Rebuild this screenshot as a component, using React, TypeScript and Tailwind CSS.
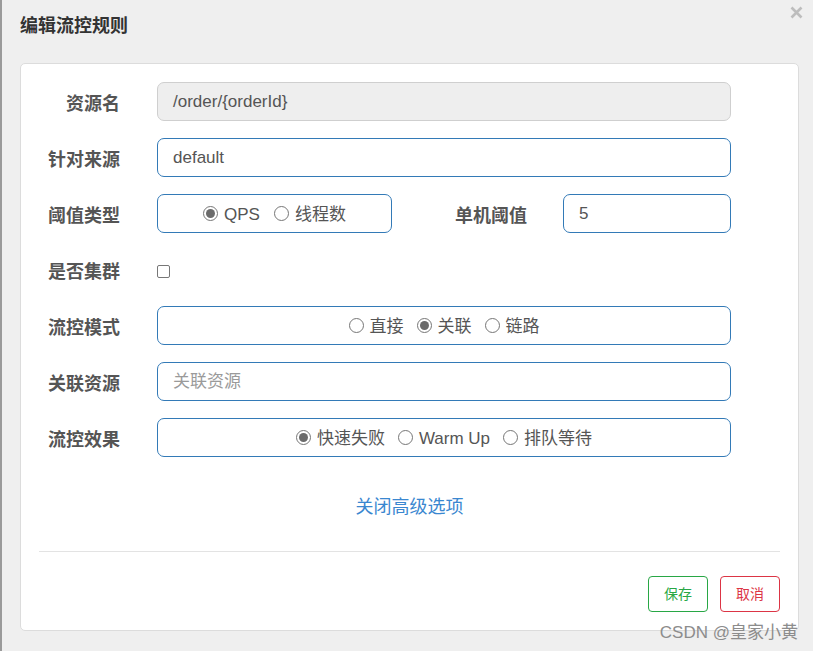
import React from 'react';

const cjk = { fontFamily: '"Liberation Sans", "Noto Sans CJK SC", sans-serif' };

function Radio({ checked, label }: { checked?: boolean; label: string }) {
  return (
    <span className="flex items-center gap-[6px]">
      <span className="w-[15px] h-[15px] rounded-full border border-[#767676] bg-white flex items-center justify-center">
        {checked && <span className="w-[9px] h-[9px] rounded-full bg-[#6b6b6b]" />}
      </span>
      <span className="pt-[2px]">{label}</span>
    </span>
  );
}

function Label({ children }: { children: React.ReactNode }) {
  return <div className="w-[99px] shrink-0 pt-[5px] text-right font-bold text-[18px] text-[#555]">{children}</div>;
}

const box = 'h-[39px] rounded-[7px] border border-[#337ab7] bg-white flex items-center text-[17px] text-[#555]';

export default function App() {
  return (
    <div className="w-[813px] h-[651px] bg-[#efefef] flex relative overflow-hidden" style={cjk}>
      <div className="w-[2px] h-full bg-[#9a9a9a]" />
      <div className="flex-1 flex flex-col">
        <div className="h-[63px] flex items-center justify-between pl-[18px] pr-[10px]">
          <h1 className="text-[18px] font-bold text-[#333] -mt-[10px]">编辑流控规则</h1>
          <svg width="13" height="13" viewBox="0 0 13 13" className="-mt-[38px]">
            <path d="M1.5 1.5 L11.5 11.5 M11.5 1.5 L1.5 11.5" stroke="#bdbdbd" strokeWidth="2.6" />
          </svg>
        </div>
        <div className="ml-[18px] w-[779px] h-[568px] bg-white border border-[#dcdcdc] rounded-[5px] pt-[18px] flex flex-col">
          <div className="flex flex-col gap-[17px]">
            <div className="flex items-center">
              <Label>资源名</Label>
              <div className="ml-[37px] w-[574px] h-[39px] rounded-[7px] border border-[#cfcfcf] bg-[#eeeeee] flex items-center px-[15px] pt-[1px] text-[17px] text-[#555]">
                /order/{'{'}orderId{'}'}
              </div>
            </div>
            <div className="flex items-center">
              <Label>针对来源</Label>
              <div className={`ml-[37px] w-[574px] px-[15px] pt-[1px] ${box}`}>default</div>
            </div>
            <div className="flex items-center">
              <Label>阈值类型</Label>
              <div className="ml-[37px] w-[574px] flex items-center">
                <div className={`w-[235px] justify-center gap-[14px] ${box}`}>
                  <Radio checked label="QPS" />
                  <Radio label="线程数" />
                </div>
                <div className="flex-1 pt-[5px] text-right font-bold text-[18px] text-[#555] pr-[36px]">单机阈值</div>
                <div className={`w-[168px] px-[15px] ${box}`}>5</div>
              </div>
            </div>
            <div className="flex items-center h-[39px]">
              <Label>是否集群</Label>
              <span className="ml-[37px] mt-[4px] w-[13px] h-[13px] rounded-[2px] border border-[#777] bg-white" />
            </div>
            <div className="flex items-center">
              <Label>流控模式</Label>
              <div className={`ml-[37px] w-[574px] justify-center gap-[13px] ${box}`}>
                <Radio label="直接" />
                <Radio checked label="关联" />
                <Radio label="链路" />
              </div>
            </div>
            <div className="flex items-center">
              <Label>关联资源</Label>
              <div className={`ml-[37px] w-[574px] px-[15px] pt-[1px] ${box}`}>
                <span className="text-[#9a9a9a]">关联资源</span>
              </div>
            </div>
            <div className="flex items-center">
              <Label>流控效果</Label>
              <div className={`ml-[37px] w-[574px] justify-center gap-[13px] ${box}`}>
                <Radio checked label="快速失败" />
                <Radio label="Warm Up" />
                <Radio label="排队等待" />
              </div>
            </div>
          </div>
          <div className="mt-[38px] text-center text-[18px] leading-[24px] text-[#3a87d0]">关闭高级选项</div>
          <div className="mx-[18px] mt-[32px] border-t border-[#e3e3e3]" />
          <div className="flex justify-end gap-[12px] mx-[18px] mt-[24px]">
            <button className="w-[60px] h-[36px] rounded-[4px] border border-[#28a745] text-[#28a745] text-[14px]">保存</button>
            <button className="w-[60px] h-[36px] rounded-[4px] border border-[#dc3545] text-[#dc3545] text-[14px]">取消</button>
          </div>
        </div>
      </div>
      <div className="absolute right-[15px] bottom-[6px] text-[17px] text-[#8c8c8c]">CSDN @皇家小黄</div>
    </div>
  );
}
